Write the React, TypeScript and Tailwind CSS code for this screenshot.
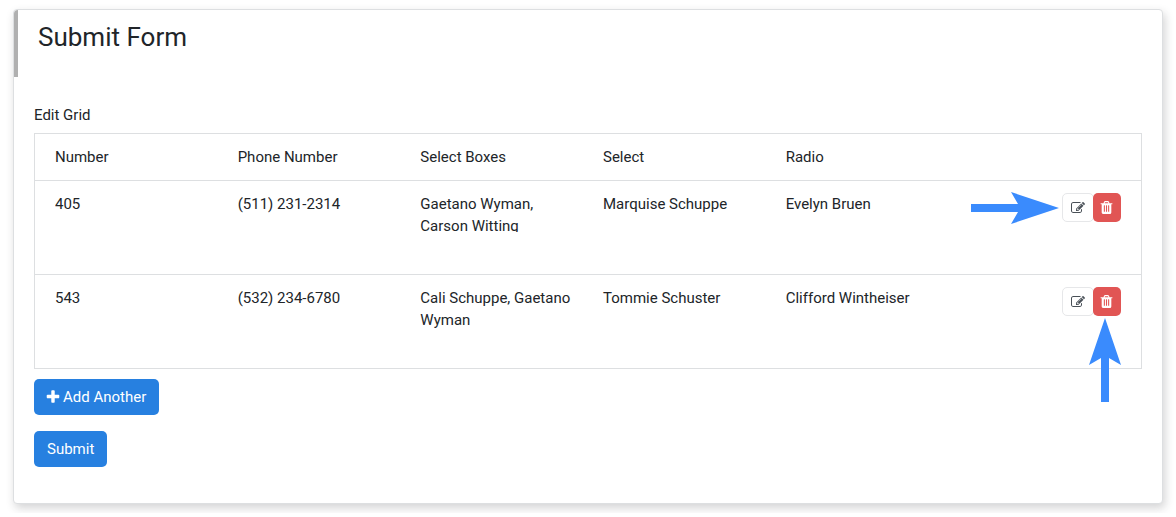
import React from "react";

const PLUS =
  "M1600 736v192q0 40-28 68t-68 28h-416v416q0 40-28 68t-68 28h-192q-40 0-68-28t-28-68v-416h-416q-40 0-68-28t-28-68v-192q0-40 28-68t68-28h416v-416q0-40 28-68t68-28h192q40 0 68 28t28 68v416h416q40 0 68 28t28 68z";
const EDIT =
  "M888 1184l116-116-152-152-116 116v56h96v96h56zm440-720q-16-16-33 1l-350 350q-17 17-1 33t33-1l350-350q17-17 1-33zm80 594v190q0 119-84.5 203.5t-203.5 84.5h-832q-119 0-203.5-84.5t-84.5-203.5v-832q0-119 84.5-203.5t203.5-84.5h832q63 0 117 25 15 7 18 23 3 17-9 29l-49 49q-14 14-32 8-23-6-45-6h-832q-66 0-113 47t-47 113v832q0 66 47 113t113 47h832q66 0 113-47t47-113v-126q0-13 9-22l64-64q15-15 35-7t20 29zm-96-738l288 288-672 672h-288v-288zm444 132l-92 92-288-288 92-92q28-28 68-28t68 28l152 152q28 28 28 68t-28 68z";
const TRASH =
  "M704 1376v-704q0-14-9-23t-23-9h-64q-14 0-23 9t-9 23v704q0 14 9 23t23 9h64q14 0 23-9t9-23zm256 0v-704q0-14-9-23t-23-9h-64q-14 0-23 9t-9 23v704q0 14 9 23t23 9h64q14 0 23-9t9-23zm256 0v-704q0-14-9-23t-23-9h-64q-14 0-23 9t-9 23v704q0 14 9 23t23 9h64q14 0 23-9t9-23zm-544-992h448l-48-117q-7-9-17-11h-317q-10 2-17 11zm928 32v64q0 14-9 23t-23 9h-96v948q0 83-47 143.5t-113 60.5h-832q-66 0-113-58.5t-47-141.5v-952h-96q-14 0-23-9t-9-23v-64q0-14 9-23t23-9h309l70-167q15-37 54-63t79-26h320q40 0 79 26t54 63l70 167h309q14 0 23 9t9 23z";

function Icon({ path, className }: { path: string; className: string }) {
  return (
    <svg viewBox="0 0 1792 1792" fill="currentColor" aria-hidden="true" className={className}>
      <path d={path} />
    </svg>
  );
}

type Row = { cells: string[]; arrow: "edit" | "delete"; clip: string };

const columns = ["Number", "Phone Number", "Select Boxes", "Select", "Radio"];
const rows: Row[] = [
  {
    cells: ["405", "(511) 231-2314", "Gaetano Wyman, Carson Witting", "Marquise Schuppe", "Evelyn Bruen"],
    arrow: "edit",
    clip: "max-h-[39px] overflow-hidden",
  },
  {
    cells: ["543", "(532) 234-6780", "Cali Schuppe, Gaetano Wyman", "Tommie Schuster", "Clifford Wintheiser"],
    arrow: "delete",
    clip: "",
  },
];

function RowActions({ arrow }: { arrow: Row["arrow"] }) {
  return (
    <div className="relative flex">
      <button
        type="button"
        aria-label="Edit row"
        className="flex h-[29px] w-8 items-center justify-center rounded-[5px] border border-[#e6e7e9] bg-white text-[#495057]"
      >
        <Icon path={EDIT} className="size-[14px]" />
      </button>
      <button
        type="button"
        aria-label="Delete row"
        className="-ml-px flex h-[29px] w-7 items-center rounded-[5px] bg-[#e15554] pl-1.5 text-white"
      >
        <Icon path={TRASH} className="size-[15px]" />
      </button>
      {arrow === "edit" ? (
        <svg
          viewBox="0 0 88 32"
          fill="#3a8bfd"
          aria-hidden="true"
          className="absolute right-full -top-px mr-[3px] h-8 w-[88px] max-w-none"
        >
          <path d="M0 12H47L40 0L88 16L40 32L47 20H0Z" />
        </svg>
      ) : (
        <svg
          viewBox="0 0 32 84"
          fill="#3a8bfd"
          aria-hidden="true"
          className="absolute right-0 top-full mt-0.5 h-[84px] w-8 max-w-none"
        >
          <path d="M12 84V40L0 47L16 0L32 47L20 40V84Z" />
        </svg>
      )}
    </div>
  );
}

const bigButton =
  "flex h-9 items-center gap-0.5 rounded-[5px] bg-[#2780e0] px-[13px] text-[15px] leading-[22px] text-white";

export default function App() {
  return (
    <div className="px-[13px] py-[9px] font-['Roboto',sans-serif] text-[15px] leading-[22px] text-[#212529]">
      <form
        onSubmit={(e) => e.preventDefault()}
        className="rounded border border-[#dddfe1] bg-white shadow-[2px_4px_10px_rgba(33,37,41,0.2)]"
      >
        <header className="h-[67px] rounded-tl-sm border-l-4 border-[#b0b0b0] px-5 pt-3">
          <h1 className="text-[26px] font-normal leading-[30px]">Submit Form</h1>
        </header>

        <div className="flex flex-col items-start px-5 pt-[27px] pb-9">
          <h2 id="grid-label" className="font-normal">
            Edit Grid
          </h2>
          <table
            aria-labelledby="grid-label"
            className="mt-[7px] block w-full border border-[#dddfe1]"
          >
            <thead className="block">
              <tr className="grid grid-cols-6 px-[5px] py-3">
                {columns.map((c) => (
                  <th key={c} scope="col" className="px-[15px] text-left font-normal">
                    {c}
                  </th>
                ))}
                <td />
              </tr>
            </thead>
            <tbody className="block">
              {rows.map((row) => (
                <tr key={row.cells[0]} className="grid h-[94px] grid-cols-6 border-t border-[#dddfe1] px-[5px] pt-3">
                  {row.cells.map((cell) => (
                    <td key={cell} className="px-[15px]">
                      <div className={row.clip}>{cell}</div>
                    </td>
                  ))}
                  <td className="flex items-start justify-end px-[15px]">
                    <RowActions arrow={row.arrow} />
                  </td>
                </tr>
              ))}
            </tbody>
          </table>

          <button type="button" className={`${bigButton} mt-2.5`}>
            <Icon path={PLUS} className="-ml-0.5 size-4" />
            Add Another
          </button>
          <button type="submit" className={`${bigButton} mt-4`}>
            Submit
          </button>
        </div>
      </form>
    </div>
  );
}
